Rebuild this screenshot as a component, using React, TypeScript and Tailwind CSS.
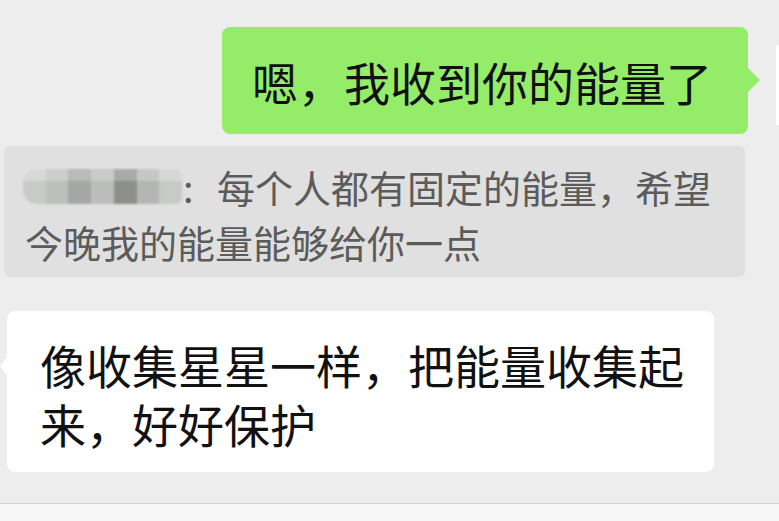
const blurCells = [
  ["bg-[#d6d9d6]", "bg-[#c6cbc6]"],
  ["bg-[#cbcecb]", "bg-[#bcc0bc]"],
  ["bg-[#b9bab9]", "bg-[#a5a7a5]"],
  ["bg-[#c9cbc9]", "bg-[#bbbdbb]"],
  ["bg-[#a9aaa8]", "bg-[#8d8f8b]"],
  ["bg-[#c6c8c6]", "bg-[#b4b6b4]"],
  ["bg-[#d6d8d6]", "bg-[#c8cac8]"]
];

function NameBlur() {
  return (
    <div className="-ml-[2px] flex h-[35px] w-[159px] shrink-0 overflow-hidden rounded-l-[14px] rounded-r-[6px] blur-[1.2px]">
      {blurCells.map(([top, bottom], i) => (
        <div className="flex flex-1 flex-col" key={i}>
          <div className={`h-[12px] ${top}`} />
          <div className={`flex-1 ${bottom}`} />
        </div>
      ))}
    </div>
  );
}

export default function App() {
  return (
    <div className="relative flex h-[521px] w-[779px] flex-col overflow-hidden bg-[#ededed] font-['Noto_Sans_CJK_SC',sans-serif]">
      <div className="absolute right-0 top-[45px] h-[80px] w-[3px] bg-white" />

      <div className="flex justify-end pr-[31px] pt-[27px]">
        <div className="relative flex h-[107px] w-[526px] items-center whitespace-nowrap rounded-[8px] bg-[#95ec69] pl-[30px] text-[46px] leading-none text-[#111]">
          嗯，我收到你的能量了
          <span className="absolute right-[-12px] top-[40px] h-0 w-0 border-y-[13px] border-l-[13px] border-y-transparent border-l-[#95ec69]" />
        </div>
      </div>

      <div className="ml-[4px] mr-[34px] mt-[12px] h-[131px] whitespace-nowrap rounded-[6px] bg-[#e0e0e0] pl-[21px] pt-[13px] text-[38px] leading-none text-[#5b5b5b]">
        <div className="flex h-[55px] items-center">
          <NameBlur />
          <span className="w-[35px] pl-[1px]">:</span>
          <span>每个人都有固定的能量，希望</span>
        </div>
        <div className="flex h-[55px] items-center">今晚我的能量能够给你一点</div>
      </div>

      <div className="relative ml-[7px] mt-[34px] h-[161px] w-[707px] whitespace-nowrap rounded-[8px] bg-white pl-[33px] pt-[23px] text-[46px] leading-none text-[#111]">
        <div className="flex h-[59px] items-center">像收集星星一样，把能量收集起</div>
        <div className="flex h-[59px] items-center">来，好好保护</div>
        <span className="absolute left-[-7px] top-[46px] h-0 w-0 border-y-[9px] border-r-[7px] border-y-transparent border-r-white" />
      </div>

      <div className="mt-auto h-[18px] border-t border-[#d2d2d2] bg-[#f6f6f6]" />
    </div>
  );
}
